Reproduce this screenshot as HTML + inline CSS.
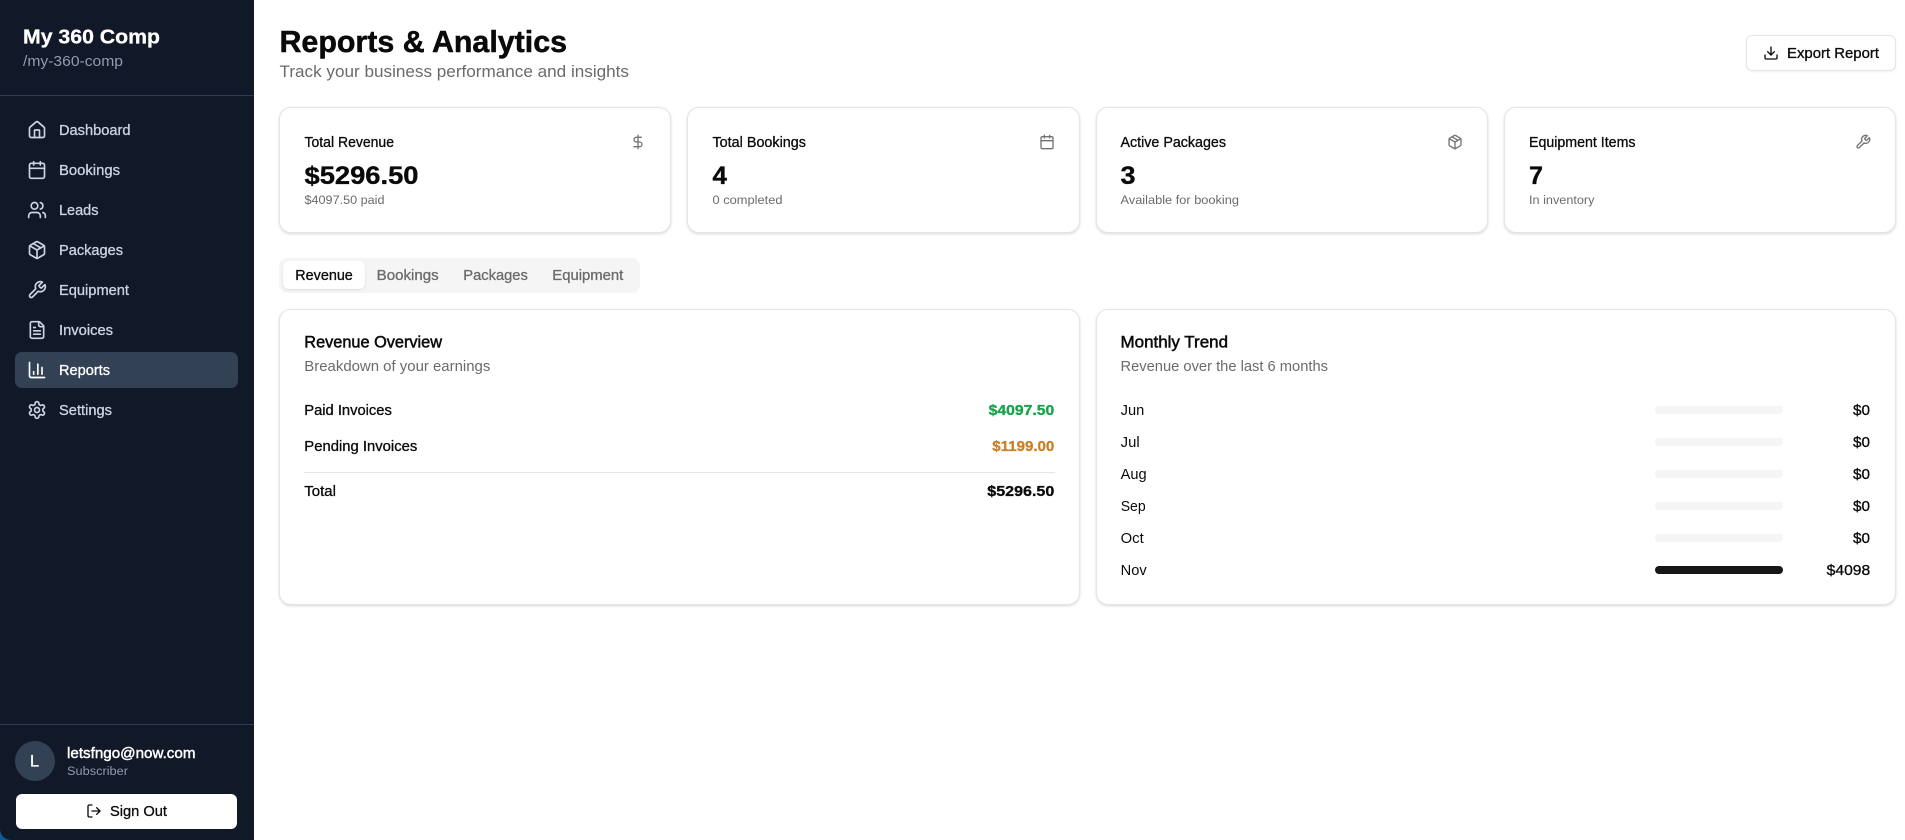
<!DOCTYPE html>
<html lang="en">
<head>
<meta charset="utf-8">
<title>Reports &amp; Analytics</title>
<style>
html,body{margin:0;padding:0;width:1905px;height:840px;overflow:hidden;background:#fff}
.b{position:absolute;box-sizing:border-box}
.card{background:#fff;border:1px solid #e5e5e5;border-radius:12px;box-shadow:0 1px 3px rgba(0,0,0,.1),0 1px 2px rgba(0,0,0,.06)}
.bar{left:1655px;width:128px;height:8px;border-radius:4px;background:#f5f5f5}
svg.o{position:absolute;left:0;top:0;display:block}
text{font-family:"Liberation Sans",sans-serif;font-size:14.4px;fill:#0a0a0a}
.m{stroke:currentColor;stroke-width:.3;paint-order:stroke}
.k{color:#0a0a0a}
.nav{fill:#cbd5e1;color:#cbd5e1}
.g{fill:#6b6b6b}
.s{font-size:12.3px}
.h{font-weight:700;stroke:currentColor;stroke-width:.3}
.val{font-size:24.6px;font-weight:700;stroke:#0a0a0a;stroke-width:.35}
.ic{fill:none;stroke-width:2;stroke-linecap:round;stroke-linejoin:round}
</style>
</head>
<body>
<div class="b" style="left:0;top:800px;width:40px;height:40px;background:#0b5c96"></div>
<aside class="b" style="left:0;top:0;width:254px;height:840px;background:#111827;border-bottom-left-radius:11px"></aside>
<div class="b" style="left:0;top:95px;width:254px;height:1px;background:#2f3b4e"></div>
<div class="b" style="left:15px;top:352px;width:223px;height:36px;border-radius:7px;background:#334155"></div>
<div class="b" style="left:0;top:724px;width:254px;height:1px;background:#2f3b4e"></div>
<div class="b" style="left:15px;top:741px;width:40px;height:40px;border-radius:50%;background:#334155"></div>
<div class="b" style="left:16px;top:793.5px;width:221px;height:35px;border-radius:6px;background:#fff"></div>

<div class="b card" style="left:1746px;top:35px;width:150px;height:35.5px;border-radius:6px;box-shadow:0 1px 2px rgba(0,0,0,.05)"></div>
<div class="b card" style="left:279px;top:107px;width:392px;height:125.5px"></div>
<div class="b card" style="left:687px;top:107px;width:393px;height:125.5px"></div>
<div class="b card" style="left:1096px;top:107px;width:392px;height:125.5px"></div>
<div class="b card" style="left:1504px;top:107px;width:392px;height:125.5px"></div>

<div class="b" style="left:279px;top:257.5px;width:361px;height:35.5px;border-radius:8px;background:#f5f5f5"></div>
<div class="b" style="left:283px;top:261px;width:82px;height:28px;border-radius:6px;background:#fff;box-shadow:0 1px 2px rgba(0,0,0,.1)"></div>

<div class="b card" style="left:279px;top:309px;width:801px;height:295.5px"></div>
<div class="b card" style="left:1096px;top:309px;width:800px;height:295.5px"></div>
<div class="b" style="left:304px;top:472px;width:751px;height:1px;background:#e5e5e5"></div>

<div class="b bar" style="top:406px"></div>
<div class="b bar" style="top:438px"></div>
<div class="b bar" style="top:470px"></div>
<div class="b bar" style="top:502px"></div>
<div class="b bar" style="top:534px"></div>
<div class="b bar" style="top:566px;background:#171717"></div>

<svg class="o" width="1905" height="840" viewBox="0 0 1905 840" xmlns="http://www.w3.org/2000/svg">
<defs>
<g id="i-home"><path d="M15 21v-8a1 1 0 0 0-1-1h-4a1 1 0 0 0-1 1v8"/><path d="M3 10a2 2 0 0 1 .709-1.528l7-5.999a2 2 0 0 1 2.582 0l7 5.999A2 2 0 0 1 21 10v9a2 2 0 0 1-2 2H5a2 2 0 0 1-2-2z"/></g>
<g id="i-cal"><path d="M8 2v4"/><path d="M16 2v4"/><rect x="3" y="4" width="18" height="18" rx="2"/><path d="M3 10h18"/></g>
<g id="i-users"><path d="M16 21v-2a4 4 0 0 0-4-4H6a4 4 0 0 0-4 4v2"/><circle cx="9" cy="7" r="4"/><path d="M22 21v-2a4 4 0 0 0-3-3.87"/><path d="M16 3.13a4 4 0 0 1 0 7.75"/></g>
<g id="i-pkg"><path d="M11 21.73a2 2 0 0 0 2 0l7-4A2 2 0 0 0 21 16V8a2 2 0 0 0-1-1.73l-7-4a2 2 0 0 0-2 0l-7 4A2 2 0 0 0 3 8v8a2 2 0 0 0 1 1.73z"/><path d="M12 22V12"/><path d="M3.29 7 12 12l8.71-5"/><path d="m7.5 4.27 9 5.15"/></g>
<g id="i-wrench"><path d="M14.7 6.3a1 1 0 0 0 0 1.4l1.6 1.6a1 1 0 0 0 1.4 0l3.77-3.77a6 6 0 0 1-7.94 7.94l-6.91 6.91a2.12 2.12 0 0 1-3-3l6.91-6.91a6 6 0 0 1 7.94-7.94l-3.76 3.76z"/></g>
<g id="i-file"><path d="M15 2H6a2 2 0 0 0-2 2v16a2 2 0 0 0 2 2h12a2 2 0 0 0 2-2V7Z"/><path d="M14 2v4a2 2 0 0 0 2 2h4"/><path d="M10 9H8"/><path d="M16 13H8"/><path d="M16 17H8"/></g>
<g id="i-chart"><path d="M3 3v16a2 2 0 0 0 2 2h16"/><path d="M18 17V9"/><path d="M13 17V5"/><path d="M8 17v-3"/></g>
<g id="i-gear"><path d="M12.22 2h-.44a2 2 0 0 0-2 2v.18a2 2 0 0 1-1 1.73l-.43.25a2 2 0 0 1-2 0l-.15-.08a2 2 0 0 0-2.73.73l-.22.38a2 2 0 0 0 .73 2.73l.15.1a2 2 0 0 1 1 1.72v.51a2 2 0 0 1-1 1.74l-.15.09a2 2 0 0 0-.73 2.73l.22.38a2 2 0 0 0 2.73.73l.15-.08a2 2 0 0 1 2 0l.43.25a2 2 0 0 1 1 1.73V20a2 2 0 0 0 2 2h.44a2 2 0 0 0 2-2v-.18a2 2 0 0 1 1-1.73l.43-.25a2 2 0 0 1 2 0l.15.08a2 2 0 0 0 2.73-.73l.22-.39a2 2 0 0 0-.73-2.73l-.15-.08a2 2 0 0 1-1-1.74v-.5a2 2 0 0 1 1-1.74l.15-.09a2 2 0 0 0 .73-2.73l-.22-.38a2 2 0 0 0-2.73-.73l-.15.08a2 2 0 0 1-2 0l-.43-.25a2 2 0 0 1-1-1.73V4a2 2 0 0 0-2-2z"/><circle cx="12" cy="12" r="3"/></g>
<g id="i-dollar"><path d="M12 2v20"/><path d="M17 5H9.5a3.5 3.5 0 0 0 0 7h5a3.5 3.5 0 0 1 0 7H6"/></g>
<g id="i-out"><path d="M9 21H5a2 2 0 0 1-2-2V5a2 2 0 0 1 2-2h4"/><path d="m16 17 5-5-5-5"/><path d="M21 12H9"/></g>
<g id="i-dl"><path d="M21 15v4a2 2 0 0 1-2 2H5a2 2 0 0 1-2-2v-4"/><path d="m7 10 5 5 5-5"/><path d="M12 15V3"/></g>
</defs>

<!-- sidebar -->
<text x="23" y="43.5" textLength="137" lengthAdjust="spacingAndGlyphs" class="h" style="font-size:20.5px;fill:#fff;color:#fff">My 360 Comp</text>
<text x="23" y="66" textLength="100" lengthAdjust="spacingAndGlyphs" style="fill:#8e9cb1">/my-360-comp</text>

<g class="ic" stroke="#cbd5e1">
<use href="#i-home" transform="translate(27 120) scale(.8333)"/>
<use href="#i-cal" transform="translate(27 160) scale(.8333)"/>
<use href="#i-users" transform="translate(27 200) scale(.8333)"/>
<use href="#i-pkg" transform="translate(27 240) scale(.8333)"/>
<use href="#i-wrench" transform="translate(27 280) scale(.8333)"/>
<use href="#i-file" transform="translate(27 320) scale(.8333)"/>
<use href="#i-chart" transform="translate(27 360) scale(.8333)" stroke="#fff"/>
<use href="#i-gear" transform="translate(27 400) scale(.8333)"/>
</g>
<text x="59" y="135" textLength="71.5" lengthAdjust="spacingAndGlyphs" class="nav m">Dashboard</text>
<text x="59" y="175" textLength="61" lengthAdjust="spacingAndGlyphs" class="nav m">Bookings</text>
<text x="59" y="215" textLength="39.5" lengthAdjust="spacingAndGlyphs" class="nav m">Leads</text>
<text x="59" y="255" textLength="64" lengthAdjust="spacingAndGlyphs" class="nav m">Packages</text>
<text x="59" y="295" textLength="70" lengthAdjust="spacingAndGlyphs" class="nav m">Equipment</text>
<text x="59" y="335" textLength="54" lengthAdjust="spacingAndGlyphs" class="nav m">Invoices</text>
<text x="59" y="375" textLength="51" lengthAdjust="spacingAndGlyphs" class="m" style="fill:#fff;color:#fff">Reports</text>
<text x="59" y="415" textLength="53" lengthAdjust="spacingAndGlyphs" class="nav m">Settings</text>

<text x="30" y="766.5" style="font-size:16.4px;fill:#fff;color:#fff" class="m">L</text>
<text x="67" y="758" textLength="128.5" lengthAdjust="spacingAndGlyphs" class="m" style="fill:#fff;color:#fff;stroke-width:.45">letsfngo@now.com</text>
<text x="67" y="775" textLength="61" lengthAdjust="spacingAndGlyphs" class="s" style="fill:#8e9cb1">Subscriber</text>
<g class="ic" stroke="#0a0a0a"><use href="#i-out" transform="translate(86 803) scale(.6667)"/></g>
<text x="110" y="816" textLength="57" lengthAdjust="spacingAndGlyphs" class="m k">Sign Out</text>

<!-- header -->
<text x="279.5" y="52" textLength="287.5" lengthAdjust="spacingAndGlyphs" class="h k" style="font-size:30.6px;stroke-width:.5">Reports &amp; Analytics</text>
<text x="279.5" y="77" textLength="349.5" lengthAdjust="spacingAndGlyphs" class="g" style="font-size:16.4px">Track your business performance and insights</text>
<g class="ic" stroke="#0a0a0a"><use href="#i-dl" transform="translate(1763 45) scale(.6667)"/></g>
<text x="1787" y="58" textLength="92" lengthAdjust="spacingAndGlyphs" class="m k">Export Report</text>

<!-- stat cards -->
<text x="304.5" y="147" textLength="89.5" lengthAdjust="spacingAndGlyphs" class="m k">Total Revenue</text>
<text x="304.5" y="184" textLength="114" lengthAdjust="spacingAndGlyphs" class="val">$5296.50</text>
<text x="304.5" y="204" textLength="80" lengthAdjust="spacingAndGlyphs" class="s g">$4097.50 paid</text>
<g class="ic" stroke="#737373"><use href="#i-dollar" transform="translate(630 134) scale(.6667)"/></g>

<text x="712.5" y="147" textLength="93.5" lengthAdjust="spacingAndGlyphs" class="m k">Total Bookings</text>
<text x="712.5" y="184" textLength="14.5" lengthAdjust="spacingAndGlyphs" class="val">4</text>
<text x="712.5" y="204" textLength="70" lengthAdjust="spacingAndGlyphs" class="s g">0 completed</text>
<g class="ic" stroke="#737373"><use href="#i-cal" transform="translate(1039 134) scale(.6667)"/></g>

<text x="1120.5" y="147" textLength="105.5" lengthAdjust="spacingAndGlyphs" class="m k">Active Packages</text>
<text x="1120.5" y="184" textLength="15" lengthAdjust="spacingAndGlyphs" class="val">3</text>
<text x="1120.5" y="204" textLength="118.5" lengthAdjust="spacingAndGlyphs" class="s g">Available for booking</text>
<g class="ic" stroke="#737373"><use href="#i-pkg" transform="translate(1447 134) scale(.6667)"/></g>

<text x="1529" y="147" textLength="106.5" lengthAdjust="spacingAndGlyphs" class="m k">Equipment Items</text>
<text x="1529" y="184" textLength="14" lengthAdjust="spacingAndGlyphs" class="val">7</text>
<text x="1529" y="204" textLength="65.5" lengthAdjust="spacingAndGlyphs" class="s g">In inventory</text>
<g class="ic" stroke="#737373"><use href="#i-wrench" transform="translate(1855 134) scale(.6667)"/></g>

<!-- tabs -->
<text x="295.3" y="280" textLength="57.5" lengthAdjust="spacingAndGlyphs" class="m k">Revenue</text>
<text x="376.7" y="280" textLength="62" lengthAdjust="spacingAndGlyphs" class="m g" style="color:#6b6b6b">Bookings</text>
<text x="463.3" y="280" textLength="64.5" lengthAdjust="spacingAndGlyphs" class="m g" style="color:#6b6b6b">Packages</text>
<text x="552.3" y="280" textLength="71" lengthAdjust="spacingAndGlyphs" class="m g" style="color:#6b6b6b">Equipment</text>

<!-- revenue overview -->
<text x="304.3" y="347.5" textLength="137.7" lengthAdjust="spacingAndGlyphs" class="m k" style="font-size:16.4px;stroke-width:.5">Revenue Overview</text>
<text x="304.3" y="371" textLength="186" lengthAdjust="spacingAndGlyphs" class="g">Breakdown of your earnings</text>
<text x="304.3" y="415" textLength="87.5" lengthAdjust="spacingAndGlyphs" class="m k">Paid Invoices</text>
<text x="304.3" y="451" textLength="113" lengthAdjust="spacingAndGlyphs" class="m k">Pending Invoices</text>
<text x="304.3" y="496" textLength="31.7" lengthAdjust="spacingAndGlyphs" class="m k">Total</text>
<text x="988.7" y="415" textLength="65.6" lengthAdjust="spacingAndGlyphs" class="h" style="fill:#16a34a;color:#16a34a">$4097.50</text>
<text x="992.3" y="451" textLength="62" lengthAdjust="spacingAndGlyphs" class="h" style="fill:#ca8026;color:#ca8026">$1199.00</text>
<text x="987.3" y="496" textLength="67" lengthAdjust="spacingAndGlyphs" class="h k">$5296.50</text>

<!-- monthly trend -->
<text x="1120.5" y="347.5" textLength="107.5" lengthAdjust="spacingAndGlyphs" class="m k" style="font-size:16.4px;stroke-width:.5">Monthly Trend</text>
<text x="1120.5" y="371" textLength="207.5" lengthAdjust="spacingAndGlyphs" class="g">Revenue over the last 6 months</text>
<text x="1120.7" y="415" textLength="23.6" lengthAdjust="spacingAndGlyphs">Jun</text>
<text x="1120.7" y="447" textLength="19" lengthAdjust="spacingAndGlyphs">Jul</text>
<text x="1120.7" y="479" textLength="26" lengthAdjust="spacingAndGlyphs">Aug</text>
<text x="1120.7" y="511" textLength="25" lengthAdjust="spacingAndGlyphs">Sep</text>
<text x="1120.7" y="543" textLength="23" lengthAdjust="spacingAndGlyphs">Oct</text>
<text x="1120.7" y="575" textLength="26" lengthAdjust="spacingAndGlyphs">Nov</text>
<text x="1853" y="415" textLength="17" lengthAdjust="spacingAndGlyphs" class="m k">$0</text>
<text x="1853" y="447" textLength="17" lengthAdjust="spacingAndGlyphs" class="m k">$0</text>
<text x="1853" y="479" textLength="17" lengthAdjust="spacingAndGlyphs" class="m k">$0</text>
<text x="1853" y="511" textLength="17" lengthAdjust="spacingAndGlyphs" class="m k">$0</text>
<text x="1853" y="543" textLength="17" lengthAdjust="spacingAndGlyphs" class="m k">$0</text>
<text x="1826.7" y="575" textLength="43.5" lengthAdjust="spacingAndGlyphs" class="m k">$4098</text>
</svg>
</body>
</html>
